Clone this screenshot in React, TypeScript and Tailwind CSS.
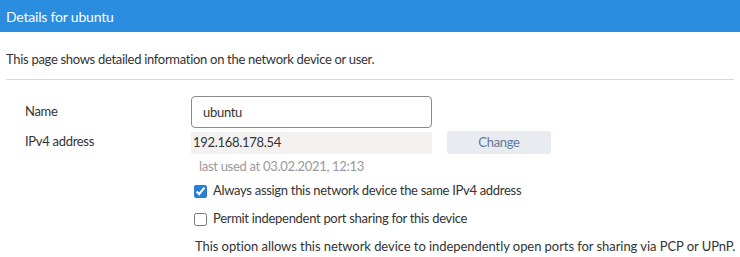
import React from 'react';

export default function App() {
  const [name, setName] = React.useState('ubuntu');
  const [fixedIp, setFixedIp] = React.useState(true);
  const [portSharing, setPortSharing] = React.useState(false);

  return (
    <div className="w-[740px] h-[257px] bg-white overflow-hidden text-[#333] font-['Lato',sans-serif] text-[13px] tracking-[-0.3px]">
      <div className="h-[32px] bg-[#2a8de0] flex items-center px-[6px]">
        <h1 className="text-white text-[14px] tracking-[-0.2px]">Details for ubuntu</h1>
      </div>

      <p className="px-[6px] pt-[18px] pb-[11px] leading-[18px]">
        This page shows detailed information on the network device or user.
      </p>
      <div className="mx-[6px] border-t border-[#d9d9d9]" />

      <div className="grid grid-cols-[166px_1fr] pl-[25px] pt-[16px]">
        <label className="h-[32px] flex items-center">Name</label>
        <div>
          <input
            value={name}
            onChange={(e) => setName(e.target.value)}
            className="w-[241px] h-[32px] border border-[#8a8a8a] rounded-[4px] px-[11px] outline-none"
          />
        </div>

        <label className="h-[22px] mt-[3px] flex items-center">IPv4 address</label>
        <div className="mt-[3px]">
          <div className="flex items-center gap-[15px]">
            <div className="w-[241px] h-[22px] bg-[#f4f2f0] flex items-center px-[2px]">192.168.178.54</div>
            <button className="w-[104px] h-[23px] bg-[#e8ecf1] rounded-[3px] text-[#60789a]">Change</button>
          </div>
          <div className="text-[#999] pl-[8px] pt-[3px] leading-[18px]">last used at 03.02.2021, 12:13</div>

          <label className="flex items-center gap-[6px] mt-[6px] ml-[3px] h-[20px]">
            <input
              type="checkbox"
              checked={fixedIp}
              onChange={(e) => setFixedIp(e.target.checked)}
              className="w-[13px] h-[13px] accent-[#2a7fd4]"
            />
            Always assign this network device the same IPv4 address
          </label>
          <label className="flex items-center gap-[6px] mt-[8px] ml-[3px] h-[20px]">
            <input
              type="checkbox"
              checked={portSharing}
              onChange={(e) => setPortSharing(e.target.checked)}
              className="w-[13px] h-[13px]"
            />
            Permit independent port sharing for this device
          </label>
          <p className="mt-[8px] ml-[4px] whitespace-nowrap leading-[18px] tracking-[-0.06px]">
            This option allows this network device to independently open ports for sharing via PCP or UPnP.
          </p>
        </div>
      </div>
    </div>
  );
}
